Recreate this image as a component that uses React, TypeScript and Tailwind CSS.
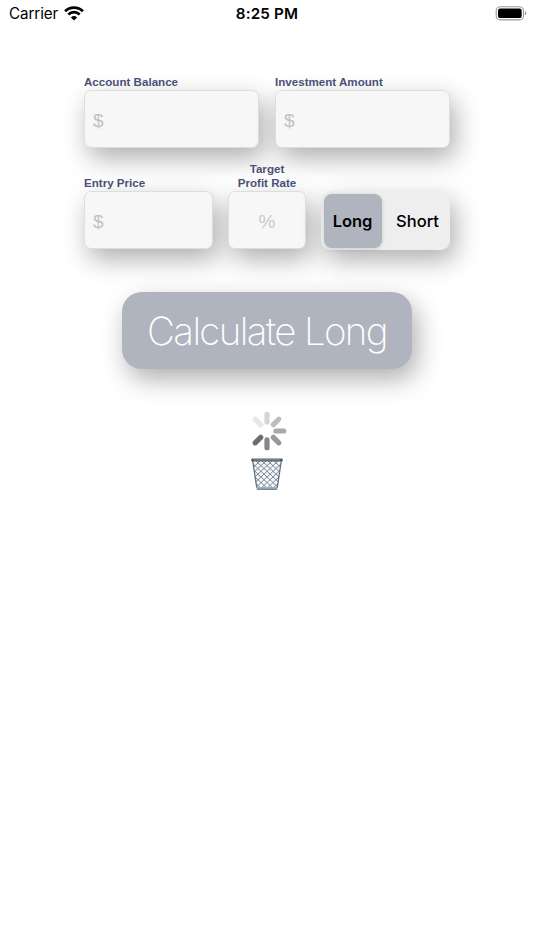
import React from "react";

const shadow = "shadow-[5px_10px_26px_rgba(0,0,0,0.32)]";

const WifiIcon: React.FC = () => (
  <svg className="ml-[6px] h-[15px] w-[20px] -translate-y-px" viewBox="0 0 20 15">
    <g fill="none" stroke="#000" strokeWidth="2.7">
      <path d="M1.1 5.2A12.7 12.7 0 0 1 18.9 5.2" />
      <path d="M4.3 8.5A8.1 8.1 0 0 1 15.7 8.5" />
    </g>
    <path d="M10 14.5L6.9 11.4A4.5 4.5 0 0 1 13.1 11.4Z" />
  </svg>
);

const BatteryIcon: React.FC = () => (
  <svg className="h-[15px] w-[32px]" viewBox="0 0 32 15">
    <rect x="1.2" y="0.7" width="27.3" height="13.2" rx="4" fill="none" stroke="#999" strokeWidth="1.1" />
    <rect x="3" y="2.5" width="23.7" height="9.6" rx="2.2" />
    <path d="M29.9 5.1C31.9 5.9 31.9 8.7 29.9 9.5Z" fill="#999" />
  </svg>
);

const StatusBar: React.FC = () => (
  <header className="grid h-[28px] grid-cols-[1fr_auto_1fr] items-center pl-[9px] pr-[9px] font-['Inter',sans-serif] text-black">
    <div className="flex items-center">
      <span className="text-[15.2px] leading-[18px] tracking-[-0.1px]">Carrier</span>
      <WifiIcon />
    </div>
    <span className="text-center text-[15.2px] font-semibold leading-[18px] tracking-[0.15px]">8:25 PM</span>
    <div className="-mr-[2px] flex justify-end pb-px">
      <BatteryIcon />
    </div>
  </header>
);

interface FieldProps {
  label: string;
  placeholder: string;
  centered?: boolean;
  className: string;
}

const Field: React.FC<FieldProps> = ({ label, placeholder, centered, className }) => (
  <label className={`flex flex-col justify-end ${className}`}>
    <span
      className={`relative z-10 whitespace-pre-line pb-px text-[11.6px] font-bold leading-[14px] text-[#4a5078] ${
        centered ? "text-center" : ""
      }`}
    >
      {label}
    </span>
    <input
      placeholder={placeholder}
      className={`h-[58px] w-full rounded-[7px] border border-[#dedede] bg-[#f7f7f7] pt-[3px] text-[19px] outline-none ${shadow} ${
        centered ? "text-center placeholder:text-[#c9c9c9]" : "px-2 placeholder:text-[#c1c1c1]"
      }`}
    />
  </label>
);

const spokes = [
  { angle: 0, color: "#d5d5d5" },
  { angle: 45, color: "#bdbdbd" },
  { angle: 90, color: "#a9a9ab" },
  { angle: 135, color: "#99999b" },
  { angle: 180, color: "#868688" },
  { angle: 225, color: "#6d6d70" },
  { angle: 315, color: "#e7e7e7" },
];

const Spinner: React.FC = () => (
  <svg className="h-[40px] w-[40px]" viewBox="-20 -20 40 40">
    {spokes.map(({ angle, color }) => (
      <rect key={angle} x="-2.6" y="-19.3" width="5.2" height="13" rx="2.6" fill={color} transform={`rotate(${angle})`} />
    ))}
  </svg>
);

const TrashIcon: React.FC = () => (
  <svg className="h-[34px] w-[34px]" viewBox="0 0 34 34">
    <defs>
      <clipPath id="basket">
        <path d="M2.5 3H31.5L27.5 32H6.5Z" />
      </clipPath>
    </defs>
    <path d="M3 4H31L27.5 31H6.5Z" fill="#f4f7fa" />
    <g clipPath="url(#basket)" fill="none" stroke="#6e7d8a" strokeWidth="0.9">
      <path d="M-24 4L8 34M-18 4L14 34M-12 4L20 34M-6 4L26 34M0 4L32 34M6 4L38 34M12 4L44 34M18 4L50 34M24 4L56 34" />
      <path d="M10 4L-22 34M16 4L-16 34M22 4L-10 34M28 4L-4 34M34 4L2 34M40 4L8 34M46 4L14 34M52 4L20 34M58 4L26 34" />
    </g>
    <path d="M2.7 4L6.8 31M31.3 4L27.2 31" stroke="#637482" strokeWidth="1.3" />
    <path d="M6.5 30H27.5L27.2 32Q17 33 6.8 32Z" fill="#9cb1c3" />
    <path d="M6.8 32.3H27.2" stroke="#566674" strokeWidth="0.9" />
    <rect x="1.2" y="1.5" width="31.6" height="3" rx="1.2" fill="#505d68" />
    <path d="M4 2.8H30" stroke="#8e9ba6" strokeWidth="0.9" />
  </svg>
);

const App: React.FC = () => {
  return (
    <div className="min-h-[950px] bg-white font-['Liberation_Sans',Arial,sans-serif]">
      <StatusBar />
      <main className="mt-[47px] flex flex-col items-center">
        <div className="flex w-[366px] gap-[16px]">
          <Field label="Account Balance" placeholder="$" className="flex-1" />
          <Field label="Investment Amount" placeholder="$" className="flex-1" />
        </div>
        <div className="mt-[14px] flex w-[366px] items-end gap-[15px]">
          <Field label="Entry Price" placeholder="$" className="w-[129px]" />
          <Field label={"Target\nProfit Rate"} placeholder="%" centered className="w-[78px]" />
          <div
            className={`-mb-px flex h-[59px] w-[129px] rounded-[9px] bg-[#eeeeef] p-[2.5px] font-['Inter',sans-serif] text-[16.5px] text-black ${shadow}`}
          >
            <button className="w-[58px] rounded-[8px] bg-[#afb4be] pt-[2px] font-semibold tracking-[-0.1px] shadow-[0_1px_4px_rgba(0,0,0,0.14)]">
              Long
            </button>
            <button className="flex-1 pl-[6px] pt-[2px] font-medium">Short</button>
          </div>
        </div>
        <button
          className={`mt-[43px] h-[77px] w-[290px] rounded-[20px] bg-[#afb4be] pt-[3px] font-['Inter',sans-serif] text-[38.5px] font-extralight tracking-[-1.65px] text-white ${shadow}`}
        >
          Calculate Long
        </button>
        <div className="mt-[42px] flex flex-col items-center">
          <Spinner />
          <button className="mt-[6px]" aria-label="Clear">
            <TrashIcon />
          </button>
        </div>
      </main>
    </div>
  );
};

export default App;
